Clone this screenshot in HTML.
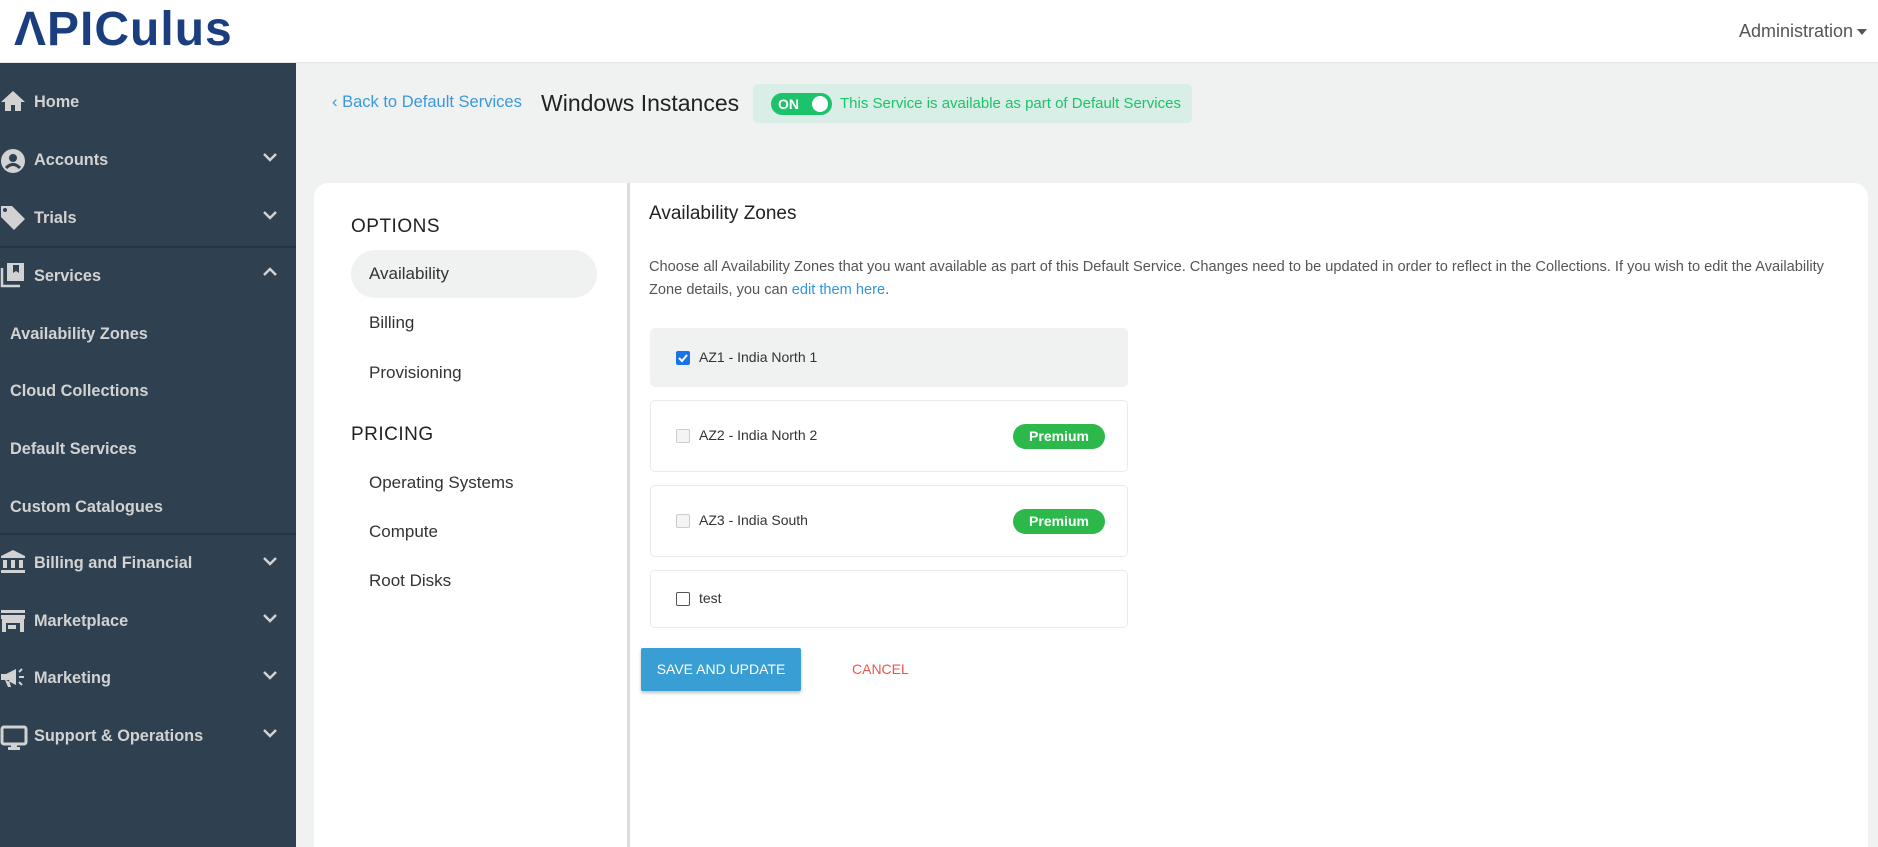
<!DOCTYPE html>
<html><head><meta charset="utf-8"><style>
*{margin:0;padding:0;box-sizing:border-box}
html,body{width:1878px;height:847px;overflow:hidden}
body{background:#f0f1f1;font-family:"Liberation Sans",sans-serif;position:relative}
.a{position:absolute;white-space:nowrap}
#hdr{position:absolute;left:0;top:0;width:1878px;height:63px;background:#fff;border-bottom:1px solid #e4e4e4}
#side{position:absolute;left:0;top:63px;width:296px;height:784px;background:#2f4051}
.nav{position:absolute;left:34px;color:#d2d2d2;font-weight:bold;font-size:16.3px}
.sub{left:10px}
.ic{position:absolute;left:0}
.chev{position:absolute;left:262px}
.sep{position:absolute;left:0;width:296px;height:2px;background:#263543}
.card{position:absolute;left:314px;top:183px;width:1554px;height:664px;background:#fff;border-radius:14px 14px 0 0}
.opt{position:absolute;left:369px;font-size:17px;color:#333}
.box{position:absolute;left:650px;width:478px;border:1px solid #eaeaea;border-radius:5px;background:#fff}
.lbl{position:absolute;left:48px;font-size:14px;color:#333}
.cb{position:absolute;left:25px;width:14px;height:14px;border:1px solid #ccc;border-radius:2px;background:#f4f4f4}
.prem{position:absolute;left:362px;width:92px;height:25px;border-radius:13px;background:#2db84b;color:#fff;font-size:14px;font-weight:bold;text-align:center;line-height:25px}
</style></head><body>
<div id="hdr">
<div class="a" style="left:14px;top:2px;font-size:48px;font-weight:bold;color:#1b3f7e;letter-spacing:1px">ΛPICulus</div>
<div class="a" style="left:1739px;top:21px;font-size:18px;color:#555">Administration</div>
<div class="a" style="left:1857px;top:29px;width:0;height:0;border-left:5px solid transparent;border-right:5px solid transparent;border-top:6px solid #555"></div>
</div>
<div id="side">
<svg class="ic" style="top:27px" width="26" height="22" viewBox="0 0 26 22"><path d="M13 1 L1 12 H5 V21 H11 V15 H15 V21 H21 V12 H25 Z" fill="#d2d2d2"/></svg>
<div class="nav" style="top:30px">Home</div>
<svg class="ic" style="top:85px" width="26" height="26" viewBox="0 0 26 26"><circle cx="13" cy="13" r="12" fill="#d2d2d2"/><circle cx="13" cy="10" r="4" fill="#2f4051"/><path d="M6 20 Q13 13 20 20" stroke="#2f4051" stroke-width="3" fill="none"/></svg>
<div class="nav" style="top:88px">Accounts</div>
<svg class="chev" style="top:88px" width="16" height="12"><path d="M2 3 L8 9 L14 3" stroke="#d2d2d2" stroke-width="2.5" fill="none"/></svg>
<svg class="ic" style="top:142px" width="26" height="26" viewBox="0 0 26 26"><path d="M1 1 H12 L25 14 L14 25 L1 12 Z" fill="#d2d2d2"/><circle cx="5" cy="5" r="2" fill="#2f4051"/></svg>
<div class="nav" style="top:146px">Trials</div>
<svg class="chev" style="top:146px" width="16" height="12"><path d="M2 3 L8 9 L14 3" stroke="#d2d2d2" stroke-width="2.5" fill="none"/></svg>
<div class="sep" style="top:183px"></div>
<svg class="ic" style="top:199px" width="26" height="26" viewBox="0 0 26 26"><path d="M2 6 V24 H20" stroke="#d2d2d2" stroke-width="2.5" fill="none"/><rect x="7" y="1" width="17" height="18" fill="#d2d2d2"/><path d="M13 3 V11 L16 9 L19 11 V3 Z" fill="#2f4051"/></svg>
<div class="nav" style="top:204px">Services</div>
<svg class="chev" style="top:203px" width="16" height="12"><path d="M2 9 L8 3 L14 9" stroke="#d2d2d2" stroke-width="2.5" fill="none"/></svg>
<div class="nav sub" style="top:262px">Availability Zones</div>
<div class="nav sub" style="top:319px">Cloud Collections</div>
<div class="nav sub" style="top:377px">Default Services</div>
<div class="nav sub" style="top:435px">Custom Catalogues</div>
<div class="sep" style="top:470px"></div>
<svg class="ic" style="top:486px" width="26" height="26" viewBox="0 0 26 26"><path d="M1 7 L13 1 L25 7 V9 H1 Z M3 11 H7 V19 H3 Z M11 11 H15 V19 H11 Z M19 11 H23 V19 H19 Z M1 21 H25 V24 H1 Z" fill="#d2d2d2"/></svg>
<div class="nav" style="top:491px">Billing and Financial</div>
<svg class="chev" style="top:492px" width="16" height="12"><path d="M2 3 L8 9 L14 3" stroke="#d2d2d2" stroke-width="2.5" fill="none"/></svg>
<svg class="ic" style="top:546px" width="26" height="24" viewBox="0 0 26 24"><path d="M1 1 H25 V4 H1 Z M1 6 H25 V10 H1 Z M2 10 H24 V23 H20 V14 H6 V23 H2 Z M8 16 H16 V20 H8 Z" fill="#d2d2d2"/></svg>
<div class="nav" style="top:549px">Marketplace</div>
<svg class="chev" style="top:549px" width="16" height="12"><path d="M2 3 L8 9 L14 3" stroke="#d2d2d2" stroke-width="2.5" fill="none"/></svg>
<svg class="ic" style="top:604px" width="26" height="22" viewBox="0 0 26 22"><path d="M1 7 H6 L16 2 V18 L6 13 H1 Z M5 13 L8 20 H11 L9 13 Z" fill="#d2d2d2"/><path d="M19 5 L22 2 M19 10 H24 M19 15 L22 18" stroke="#d2d2d2" stroke-width="2"/></svg>
<div class="nav" style="top:606px">Marketing</div>
<svg class="chev" style="top:606px" width="16" height="12"><path d="M2 3 L8 9 L14 3" stroke="#d2d2d2" stroke-width="2.5" fill="none"/></svg>
<svg class="ic" style="top:662px" width="28" height="26" viewBox="0 0 28 26"><rect x="2" y="2" width="24" height="17" rx="2" stroke="#d2d2d2" stroke-width="3" fill="none"/><rect x="11" y="19" width="6" height="4" fill="#d2d2d2"/><rect x="8" y="22" width="12" height="3" fill="#d2d2d2"/></svg>
<div class="nav" style="top:664px">Support &amp; Operations</div>
<svg class="chev" style="top:664px" width="16" height="12"><path d="M2 3 L8 9 L14 3" stroke="#d2d2d2" stroke-width="2.5" fill="none"/></svg>
</div>

<div class="a" style="left:332px;top:93px;font-size:16.5px;color:#3a9ad9">‹ Back to Default Services</div>
<div class="a" style="left:541px;top:90px;font-size:23px;color:#222">Windows Instances</div>
<div class="a" style="left:753px;top:84px;width:439px;height:39px;background:#d9eee6;border-radius:5px"></div>
<div class="a" style="left:771px;top:93px;width:61px;height:22px;background:#1dc36a;border-radius:11px"></div>
<div class="a" style="left:778px;top:96px;font-size:14px;font-weight:bold;color:#fff">ON</div>
<div class="a" style="left:812px;top:96px;width:16px;height:16px;background:#fff;border-radius:8px"></div>
<div class="a" style="left:840px;top:95px;font-size:15px;color:#1dc36a">This Service is available as part of Default Services</div>

<div class="card"></div>
<div class="a" style="left:627px;top:183px;width:3px;height:664px;background:#dcdcdc"></div>
<div class="a" style="left:351px;top:216px;font-size:19px;color:#222;letter-spacing:.5px">OPTIONS</div>
<div class="a" style="left:351px;top:250px;width:246px;height:48px;background:#f0f1f1;border-radius:24px"></div>
<div class="opt" style="top:264px">Availability</div>
<div class="opt" style="top:313px">Billing</div>
<div class="opt" style="top:363px">Provisioning</div>
<div class="a" style="left:351px;top:424px;font-size:19px;color:#222;letter-spacing:.5px">PRICING</div>
<div class="opt" style="top:473px">Operating Systems</div>
<div class="opt" style="top:522px">Compute</div>
<div class="opt" style="top:571px">Root Disks</div>

<div class="a" style="left:649px;top:203px;font-size:19px;color:#222">Availability Zones</div>
<div class="a" style="left:649px;top:256px;font-size:14.6px;color:#555;line-height:23px">Choose all Availability Zones that you want available as part of this Default Service. Changes need to be updated in order to reflect in the Collections. If you wish to edit the Availability<br>Zone details, you can <span style="color:#2d96e0">edit them here</span>.</div>

<div class="box" style="top:328px;height:59px;background:#f0f1f1;border-color:#f0f1f1">
<div class="cb" style="top:22px;background:#1a73e8;border-color:#1a73e8"><svg width="12" height="12" style="position:absolute;left:0;top:0"><path d="M2 6 L5 9 L10 3" stroke="#fff" stroke-width="2" fill="none"/></svg></div>
<div class="lbl" style="top:20px">AZ1 - India North 1</div></div>
<div class="box" style="top:400px;height:72px">
<div class="cb" style="top:28px"></div><div class="lbl" style="top:26px">AZ2 - India North 2</div><div class="prem" style="top:23px">Premium</div></div>
<div class="box" style="top:485px;height:72px">
<div class="cb" style="top:28px"></div><div class="lbl" style="top:26px">AZ3 - India South</div><div class="prem" style="top:23px">Premium</div></div>
<div class="box" style="top:570px;height:58px">
<div class="cb" style="top:21px;background:#fff;border:1.5px solid #555"></div><div class="lbl" style="top:19px">test</div></div>

<div class="a" style="left:641px;top:648px;width:160px;height:43px;background:#399ed3;border-radius:2px;box-shadow:0 2px 3px rgba(0,0,0,.25);color:#fff;font-size:14px;text-align:center;line-height:43px">SAVE AND UPDATE</div>
<div class="a" style="left:852px;top:661px;font-size:14px;color:#e8574a">CANCEL</div>
</body></html>
